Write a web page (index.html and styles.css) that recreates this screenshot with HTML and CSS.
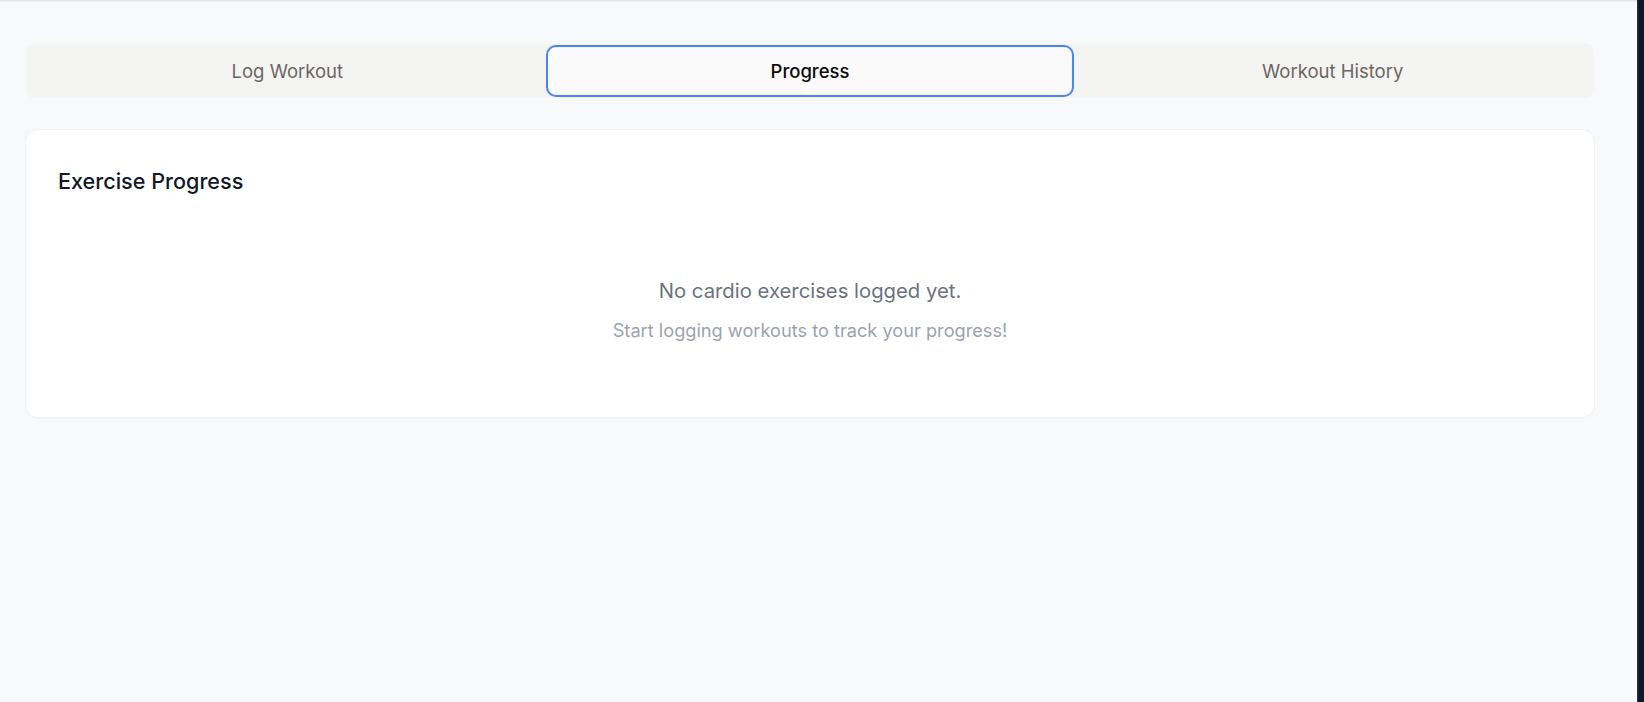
FILE: index.html
```html
<!DOCTYPE html>
<html lang="en">
<head>
<meta charset="utf-8">
<title>Exercise Progress</title>
<link rel="stylesheet" href="styles.css">
</head>
<body>
<div class="app">
  <div class="main">
    <div class="topline"></div>
    <div class="content">
      <div class="tabs">
        <button class="tab">Log Workout</button>
        <button class="tab active">Progress</button>
        <button class="tab">Workout History</button>
      </div>
      <section class="card">
        <h2 class="card-title">Exercise Progress</h2>
        <div class="empty">
          <p class="empty-main">No cardio exercises logged yet.</p>
          <p class="empty-sub">Start logging workouts to track your progress!</p>
        </div>
      </section>
    </div>
  </div>
  <div class="side-strip"></div>
</div>
</body>
</html>
```

FILE: styles.css
```css
* { box-sizing: border-box; }
html, body { margin: 0; padding: 0; height: 100%; }
body {
  background: #f8f9fb;
  font-family: Inter, "Noto Sans", "Liberation Sans", sans-serif;
  -webkit-font-smoothing: antialiased;
}
.app {
  display: flex;
  height: 100%;
}
.main {
  flex: 1;
  min-width: 0;
}
.topline {
  height: 1px;
  background: #e3e5e8;
  box-shadow: 0 1px 1px rgba(0,0,0,0.04);
}
.content {
  padding: 43px 0 0 26px;
  width: 1594px;
}
.tabs {
  display: flex;
  height: 54px;
  padding: 4px 0;
  background: #f4f4f2;
  border-radius: 8px;
}
.tab {
  flex: 1;
  border: none;
  background: transparent;
  font-family: inherit;
  font-size: 18.5px;
  font-weight: 400;
  color: #6b6661;
  border-radius: 7px;
  cursor: pointer;
  padding-top: 1px;
}
.tab.active {
  background: #fafafa;
  color: #0b0b0b;
  font-size: 18.5px;
  font-weight: 500;
  outline: 2px solid #4a84f2;
  outline-offset: 1px;
}
.card {
  margin-top: 32px;
  background: #ffffff;
  border-radius: 12px;
  box-shadow: 0 0 0 1px #f1f2f4, 0 1px 2px rgba(0,0,0,0.03);
  padding: 32px 32px 48px;
  height: 287px;
}
.card-title {
  margin: 0;
  font-size: 21.6px;
  font-weight: 500;
  color: #111827;
  line-height: 38px;
}
.empty {
  text-align: center;
  padding-top: 76px;
}
.empty-main {
  margin: 0;
  font-size: 20.3px;
  color: #6b7280;
  line-height: 30px;
}
.empty-sub {
  margin: 11px 0 0;
  font-size: 18.2px;
  color: #9ca3af;
  line-height: 26px;
}
.side-strip {
  width: 7px;
  background: #0f172a;
  border-left: 1px solid #2a3344;
}
```
